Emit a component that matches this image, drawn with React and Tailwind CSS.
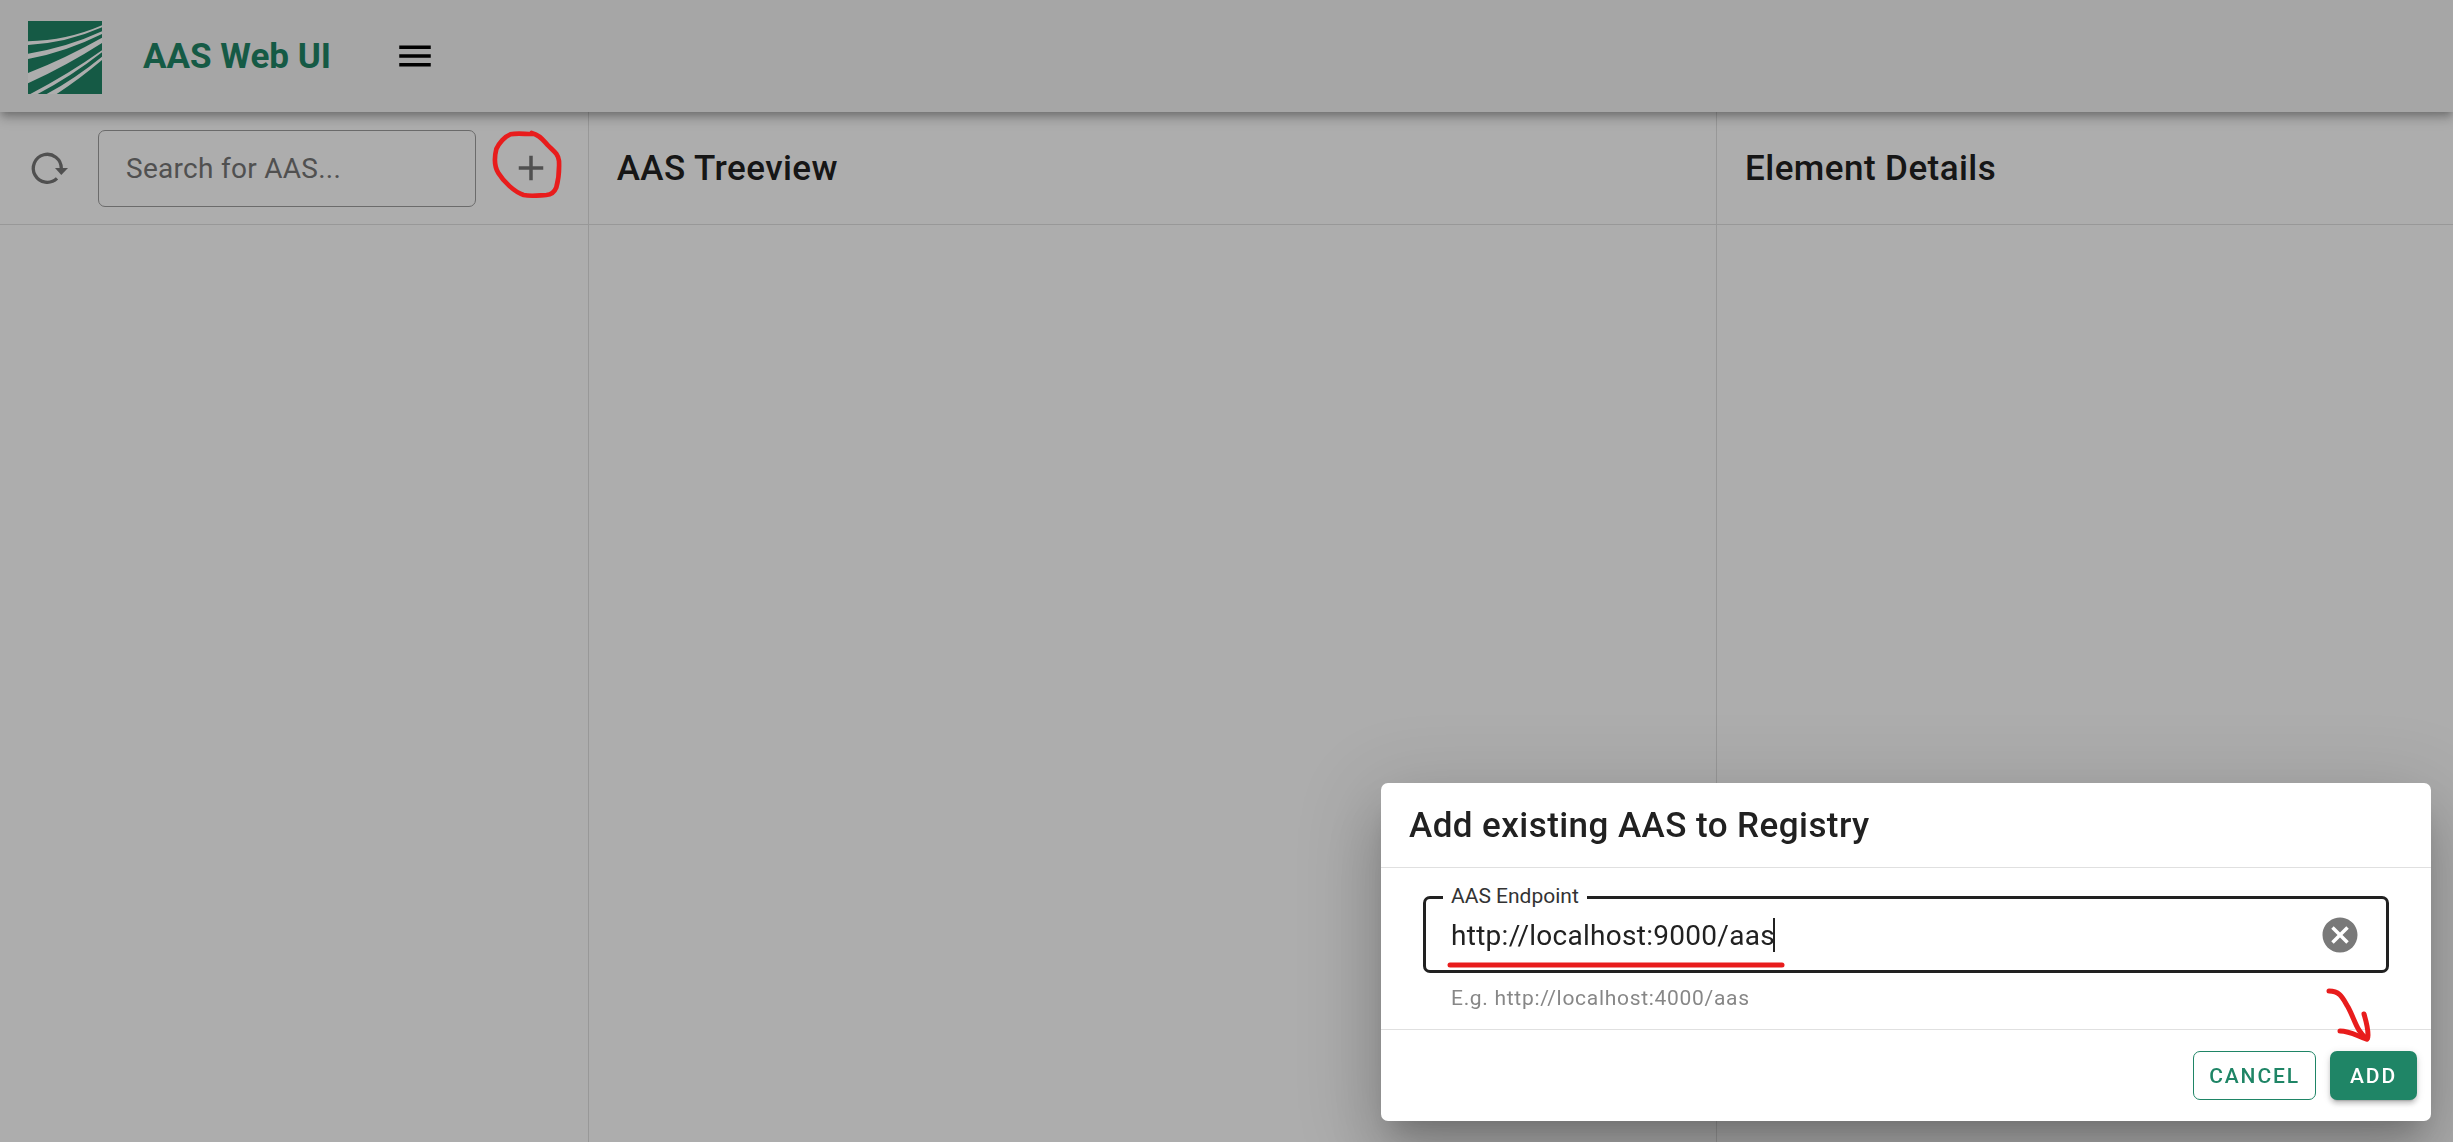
import React, { useState } from "react";

const MENU = "M3 6H21V8H3V6M3 11H21V13H3V11M3 16H21V18H3V16Z";
const PLUS = "M19 13H13V19H11V13H5V11H11V5H13V11H19V13Z";
const CLEAR =
  "M12 2C17.53 2 22 6.47 22 12S17.53 22 12 22 2 17.53 2 12 6.47 2 12 2M15.59 7L12 10.59L8.41 7L7 8.41L10.59 12L7 15.59L8.41 17L12 13.41L15.59 17L17 15.59L13.41 12L17 8.41L15.59 7Z";

function Icon({ path, className }) {
  return (
    <svg viewBox="0 0 24 24" fill="currentColor" className={className} aria-hidden="true">
      <path d={path} />
    </svg>
  );
}

function ReloadIcon() {
  return (
    <svg viewBox="0 0 46 46" className="size-[46px]" aria-hidden="true">
      <path
        d="M35.3 24V23.3A14 14 0 1 0 31 33.4"
        fill="none"
        stroke="currentColor"
        strokeWidth="3.3"
      />
      <path d="M29 23H42L35.3 30Z" fill="currentColor" />
    </svg>
  );
}

function Logo() {
  return (
    <svg viewBox="84 63 222 219" className="mt-0.5 h-[73px] w-[74px] shrink-0" aria-hidden="true">
      <rect x="84" y="63" width="222" height="219" fill="#1f8566" />
      <g fill="#fff">
        <path d="M84 124Q200 122 306 76V82Q200 129 84 135Z" />
        <path d="M84 161Q200 143 306 94V102Q195 157 84 177Z" />
        <path d="M84 219Q200 173 306 113V129Q200 197 84 250Z" />
        <path d="M91 282Q205 223 306 151V157Q210 232 113 282Z" />
        <path d="M140 282Q225 236 306 170V180Q240 236 170 282Z" />
      </g>
    </svg>
  );
}

function PanelTitle({ children }) {
  return (
    <div className="flex h-[113px] items-center border-b border-[#e0e0e0] px-7 pt-0.5">
      <h2 className="text-[35px] leading-[56px] font-medium tracking-[0.0125em]">{children}</h2>
    </div>
  );
}

function AddDialog() {
  const [endpoint, setEndpoint] = useState("http://localhost:9000/aas");
  return (
    <div
      role="dialog"
      aria-labelledby="dialog-title"
      className="fixed right-[22px] bottom-[21px] z-50 w-[1050px] rounded-[7px] bg-white shadow-[0_19px_26px_-12px_rgba(0,0,0,0.2),0_42px_66px_5px_rgba(0,0,0,0.14),0_16px_80px_14px_rgba(0,0,0,0.12)]"
    >
      <div className="border-b border-[#e0e0e0] px-7 pt-[15px] pb-[13px]">
        <h2 id="dialog-title" className="text-[35px] leading-[56px] font-medium tracking-[0.0125em]">
          Add existing AAS to Registry
        </h2>
      </div>
      <div className="border-b border-[#e0e0e0] px-[42px] pt-7 pb-[17px]">
        <div className="relative flex h-[77px] items-center rounded-[7px] border-3 border-[#212121] pr-[25px] pl-[25px]">
          <label
            htmlFor="endpoint"
            className="absolute -top-[17px] left-[17px] bg-white px-2 text-[21px] leading-7 text-[#333]"
          >
            AAS Endpoint
          </label>
          <input
            id="endpoint"
            type="text"
            value={endpoint}
            onChange={(e) => setEndpoint(e.target.value)}
            aria-describedby="endpoint-hint"
            className="h-14 min-w-0 flex-1 bg-transparent pt-0.5 text-[28px] tracking-[0.01em] outline-none"
          />
          <span className="absolute top-[19px] left-[347px] h-[34px] w-0.5 bg-[#212121]" />
          <button type="button" aria-label="Clear" className="text-[#797979]">
            <Icon path={CLEAR} className="size-[42px]" />
          </button>
          <svg
            className="pointer-events-none absolute top-[62px] left-[20px] h-2 w-[340px]"
            viewBox="0 0 340 8"
            aria-hidden="true"
          >
            <path d="M4 4H336" stroke="#e81c1c" strokeWidth="5" strokeLinecap="round" />
          </svg>
        </div>
        <p
          id="endpoint-hint"
          className="mt-[11px] px-7 text-[21px] leading-7 tracking-[0.0333em] text-[#878787]"
        >
          E.g. http://localhost:4000/aas
        </p>
      </div>
      <div className="relative flex justify-end gap-3.5 px-3.5 py-[21px]">
        <button
          type="button"
          className="h-[49px] rounded-[7px] border border-[#1f8566] px-[15px] pt-0.5 text-[21px] font-medium tracking-[0.09em] text-[#1f8566]"
        >
          CANCEL
        </button>
        <button
          type="button"
          className="h-[49px] rounded-[7px] bg-[#1f8566] px-5 pt-0.5 text-[21px] font-medium tracking-[0.09em] text-white shadow-[0_5px_2px_-4px_rgba(0,0,0,0.2),0_4px_4px_0_rgba(0,0,0,0.14),0_2px_9px_0_rgba(0,0,0,0.12)]"
        >
          ADD
        </button>
        <svg
          className="pointer-events-none absolute -top-[44px] right-[52px] h-[60px] w-[54px]"
          viewBox="0 0 54 60"
          fill="none"
          stroke="#e81c1c"
          strokeWidth="5"
          strokeLinecap="round"
          strokeLinejoin="round"
          aria-hidden="true"
        >
          <path d="M4 5C16 5 18 13 23 21C30 34 32 46 42 53" />
          <path d="M15 45C25 45 32 50 41 53C43 53 43 51 43 49C43 41 41 35 39 28" />
        </svg>
      </div>
    </div>
  );
}

export default function App() {
  return (
    <div className="flex min-h-screen flex-col bg-white font-['Roboto',sans-serif] text-[#212121]">
      <header className="relative z-10 flex h-28 items-center bg-[#f5f5f5] px-7 shadow-[0_4px_7px_-2px_rgba(0,0,0,0.2),0_7px_9px_0_rgba(0,0,0,0.14),0_2px_18px_0_rgba(0,0,0,0.12)]">
        <Logo />
        <h1 className="ml-[41px] pt-0.5 text-[35px] leading-[56px] font-bold text-[#1f8566]">
          AAS Web UI
        </h1>
        <button type="button" aria-label="Menu" className="ml-[63px] text-black">
          <Icon path={MENU} className="size-[42px]" />
        </button>
      </header>

      <main className="grid flex-1 grid-cols-[minmax(0,24fr)_minmax(0,46fr)_minmax(0,30fr)]">
        <section className="border-r border-[#e0e0e0]">
          <div className="flex h-[113px] items-center border-b border-[#e0e0e0] pr-9 pl-[26px]">
            <button type="button" aria-label="Reload" className="text-[#777]">
              <ReloadIcon />
            </button>
            <input
              type="text"
              aria-label="Search for AAS"
              placeholder="Search for AAS..."
              className="ml-[26px] h-[77px] min-w-0 flex-1 rounded-[7px] border border-[#9e9e9e] px-[27px] text-[28px] tracking-[0.01em] outline-none placeholder:text-[#777]"
            />
            <div className="relative ml-[34px] flex">
              <button type="button" aria-label="Add AAS" className="text-[#777]">
                <Icon path={PLUS} className="size-[42px]" />
              </button>
              <svg
                className="pointer-events-none absolute -top-[18px] -left-[19px] z-50 h-[70px] w-[74px]"
                viewBox="0 0 222 210"
                fill="none"
                stroke="#e81c1c"
                strokeWidth="14"
                strokeLinecap="round"
                strokeLinejoin="round"
                aria-hidden="true"
              >
                <path d="M122 12C146 18 156 33 171 49C188 66 202 75 204 96C205 120 203 150 196 175C190 190 180 197 166 198C144 199 120 203 98 198C70 189 38 158 22 132C10 112 10 84 16 60C24 42 42 22 58 16C82 11 104 16 128 15" />
              </svg>
            </div>
          </div>
        </section>
        <section className="border-r border-[#e0e0e0]">
          <PanelTitle>AAS Treeview</PanelTitle>
        </section>
        <section>
          <PanelTitle>Element Details</PanelTitle>
        </section>
      </main>

      <div className="fixed inset-0 z-40 bg-black/32" />
      <AddDialog />
    </div>
  );
}
